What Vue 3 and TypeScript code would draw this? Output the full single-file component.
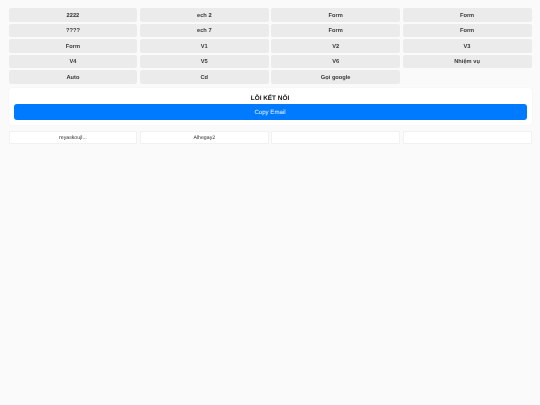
<script setup lang="ts">
const buttons: string[] = ['2222','ech 2','Form','Form','????','ech 7','Form','Form','Form','V1','V2','V3','V4','V5','V6','Nhiệm vụ','Auto','Cd','Gọi google']
const slots: string[] = ['reyaskoujl...','Alhegay2','','']
</script>

<template>
  <main class="page">
    <section class="grid">
      <button v-for="(b, i) in buttons" :key="i" class="action">{{ b }}</button>
    </section>
    <section class="card">
      <h2 class="title">LỖI KẾT NỐI</h2>
      <button class="copy">Copy Email</button>
    </section>
    <section class="grid slots">
      <div v-for="(s, i) in slots" :key="i" class="slot">{{ s }}</div>
    </section>
  </main>
</template>

<style>
html, body { margin: 0; background: #fafafa; }
</style>

<style scoped>
.page {
  box-sizing: border-box;
  width: 540px;
  height: 405px;
  padding: 8px 8.5px;
  background: #fafafa;
  font-family: "Liberation Sans", Arial, sans-serif;
  text-rendering: geometricPrecision;
  filter: blur(.35px);
}
.grid {
  display: grid;
  grid-template-columns: repeat(4, 1fr);
  column-gap: 2.5px;
  row-gap: 2px;
}
.action {
  box-sizing: border-box;
  height: 13.5px;
  padding: 1.6px 0 0;
  border: 0;
  border-radius: 2px;
  background: #ebebeb;
  color: #3a3a3a;
  font: 700 5.7px "Liberation Sans", Arial, sans-serif;
  text-rendering: geometricPrecision;
}
.card {
  margin-top: 4.5px;
  padding: 4px 5px 5px;
  height: 36.5px;
  box-sizing: border-box;
  background: #fff;
  border-radius: 3px;
  box-shadow: 0 0 2px rgba(0,0,0,.05);
  display: flex;
  flex-direction: column;
}
.title {
  margin: 0;
  height: 12px;
  line-height: 13.5px;
  text-align: center;
  font-size: 6.4px;
  font-weight: 700;
  color: #111;
}
.copy {
  box-sizing: border-box;
  height: 15.5px;
  padding: 1px 0 0;
  border: 0;
  border-radius: 3px;
  background: #007bff;
  color: #e8f2ff;
  font: 400 6.1px "Liberation Sans", Arial, sans-serif;
  text-rendering: geometricPrecision;
}
.slots { margin-top: 6px; }
.slot {
  height: 13.5px;
  line-height: 14.5px;
  text-align: center;
  background: #fff;
  border-radius: 2px;
  box-shadow: inset 0 0 0 .5px #e4e4e4;
  color: #333;
  font-size: 5.2px;
}
</style>
